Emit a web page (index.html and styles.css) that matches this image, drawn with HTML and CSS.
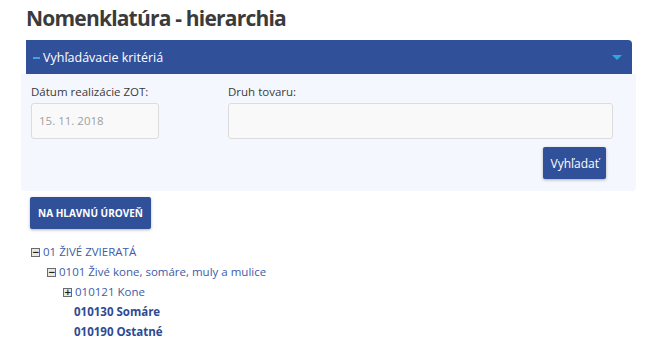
FILE: index.html
```html
<!DOCTYPE html>
<html lang="sk">
<head>
    <meta charset="UTF-8">
    <title>Nomenklatúra - hierarchia</title>
    <link rel="stylesheet" href="styles.css">
</head>
<body>
<div class="page">
    <h1 class="title">Nomenklatúra - hierarchia</h1>

    <div class="panel">
        <div class="panel-head">
            <span class="dash"></span>
            <span class="head-text">Vyhľadávacie kritériá</span>
            <span class="caret"></span>
        </div>
        <div class="panel-body">
            <div class="fields">
                <div class="field field-date">
                    <label>Dátum realizácie ZOT:</label>
                    <div class="input input-disabled">15. 11. 2018</div>
                </div>
                <div class="field field-wide">
                    <label>Druh tovaru:</label>
                    <div class="input"></div>
                </div>
            </div>
            <div class="actions">
                <button class="btn">Vyhľadať</button>
            </div>
        </div>
    </div>

    <button class="btn btn-upper">NA HLAVNÚ ÚROVEŇ</button>

    <ul class="tree">
        <li class="lvl1"><span class="tog">&minus;</span>01 ŽIVÉ ZVIERATÁ</li>
        <li class="lvl2"><span class="tog">&minus;</span>0101 Živé kone, somáre, muly a mulice</li>
        <li class="lvl3"><span class="tog">+</span>010121 Kone</li>
        <li class="lvl3 leaf">010130 Somáre</li>
        <li class="lvl3 leaf">010190 Ostatné</li>
    </ul>
</div>
</body>
</html>
```

FILE: styles.css
```css
*{
    margin: 0;
    padding: 0;
    list-style: none;
    box-sizing: border-box;
}
html,body{
    background-color: #ffffff;
    font-family: "Open Sans", "Liberation Sans", sans-serif;
    font-size: 11.5px;
    color: #333333;
}
.page{
    padding: 4px 26px 0 26px;
    width: 662px;
}
.title{
    font-size: 21px;
    font-weight: 700;
    letter-spacing: -0.8px;
    color: #3b3b3b;
    line-height: 28px;
    height: 36px;
}
.panel{
    width: 606px;
}
.panel-head{
    height: 34px;
    background-color: #31509a;
    border-radius: 0 4px 0 0;
    display: flex;
    align-items: center;
    padding: 0 8px 0 7px;
    color: #ffffff;
    font-size: 12.5px;
}
.dash{
    width: 7px;
    height: 2px;
    background-color: #3aa3e3;
    margin-right: 3px;
    margin-top: 1px;
}
.head-text{
    flex: 1;
}
.caret{
    width: 0;
    height: 0;
    border-left: 5px solid transparent;
    border-right: 5px solid transparent;
    border-top: 5px solid #2ea6e6;
    margin-right: 2px;
}
.panel-body{
    background-color: #f4f7fe;
    margin: 0 -4px 0 -5px;
    padding: 9px 23px 12px 10px;
    border-radius: 0 0 3px 3px;
}
.fields{
    display: flex;
    gap: 69px;
}
.field label{
    display: block;
    line-height: 17px;
    margin-bottom: 3px;
    color: #3a3a3a;
}
.field-date{
    width: 128px;
}
.field-wide{
    flex: 1;
}
.input{
    height: 36px;
    background-color: #f9f9f9;
    border: 1px solid #dcdcdc;
    border-radius: 3px;
    padding: 0 7px;
    line-height: 34px;
}
.input-disabled{
    color: #a0a0a0;
}
.actions{
    display: flex;
    justify-content: flex-end;
    padding-top: 8px;
    padding-right: 7px;
}
.btn{
    background-color: #31509a;
    color: #ffffff;
    border: none;
    border-radius: 2px;
    font-family: "Open Sans", "Liberation Sans", sans-serif;
    font-size: 12px;
    height: 32px;
    padding: 0 7px;
    box-shadow: 0 1px 3px rgba(0,0,0,0.3);
}
.btn-upper{
    margin-top: 6px;
    margin-left: 4px;
    font-size: 10px;
    font-weight: 700;
    padding: 0 8px;
    height: 32px;
}
.tree{
    margin-top: 13px;
    color: #3d5ba8;
}
.tree li{
    line-height: 20px;
    display: flex;
    align-items: center;
}
.tog{
    display: inline-block;
    width: 9px;
    height: 9px;
    border: 1px solid #6b6b6b;
    background-color: #e8e8e8;
    color: #222;
    font-size: 9px;
    line-height: 6px;
    text-align: center;
    margin-right: 3px;
    font-family: "DejaVu Sans", sans-serif;
    font-weight: 700;
}
.lvl1{
    padding-left: 5px;
}
.lvl2{
    padding-left: 21px;
}
.lvl3{
    padding-left: 37px;
}
.leaf{
    padding-left: 48px;
    font-weight: 700;
    color: #2e4a93;
}
```
